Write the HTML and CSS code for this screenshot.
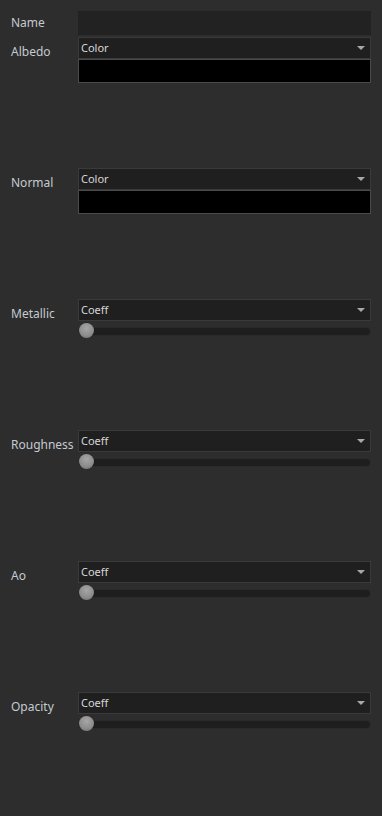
FILE: index.html
```html
<!DOCTYPE html>
<html>
<head>
<meta charset="utf-8">
<link rel="stylesheet" href="styles.css">
</head>
<body>
<div class="panel">
  <div class="row name-row">
    <div class="label">Name</div>
    <div class="name-input"></div>
  </div>

  <div class="row section">
    <div class="label sec-label">Albedo</div>
    <div class="controls">
      <div class="combo"><span>Color</span><i class="arrow"></i></div>
      <div class="swatch"></div>
    </div>
  </div>

  <div class="row section">
    <div class="label sec-label">Normal</div>
    <div class="controls">
      <div class="combo"><span>Color</span><i class="arrow"></i></div>
      <div class="swatch"></div>
    </div>
  </div>

  <div class="row section">
    <div class="label sec-label">Metallic</div>
    <div class="controls">
      <div class="combo"><span>Coeff</span><i class="arrow"></i></div>
      <div class="slider"><div class="groove"></div><div class="knob"></div></div>
    </div>
  </div>

  <div class="row section">
    <div class="label sec-label">Roughness</div>
    <div class="controls">
      <div class="combo"><span>Coeff</span><i class="arrow"></i></div>
      <div class="slider"><div class="groove"></div><div class="knob"></div></div>
    </div>
  </div>

  <div class="row section">
    <div class="label sec-label">Ao</div>
    <div class="controls">
      <div class="combo"><span>Coeff</span><i class="arrow"></i></div>
      <div class="slider"><div class="groove"></div><div class="knob"></div></div>
    </div>
  </div>

  <div class="row section">
    <div class="label sec-label">Opacity</div>
    <div class="controls">
      <div class="combo"><span>Coeff</span><i class="arrow"></i></div>
      <div class="slider"><div class="groove"></div><div class="knob"></div></div>
    </div>
  </div>
</div>
</body>
</html>
```

FILE: styles.css
```css
html, body {
  margin: 0;
  padding: 0;
  background: #2d2d2d;
  height: 100%;
  overflow: hidden;
}

.panel {
  display: flex;
  flex-direction: column;
  padding: 11px 11px 0 11px;
  font-family: "Noto Sans", "DejaVu Sans", sans-serif;
}

.row {
  display: grid;
  grid-template-columns: 67px 293px;
  flex: none;
}

.name-row {
  align-items: center;
  height: 24px;
  margin-bottom: 2px;
}

.label {
  color: #c4cad0;
  font-size: 12px;
  line-height: 16px;
  white-space: nowrap;
}

.name-input {
  height: 24px;
  background: #222222;
}

.section {
  height: 131px;
  align-items: start;
}

.sec-label {
  margin-top: 7px;
}

.controls {
  display: flex;
  flex-direction: column;
}

.combo {
  box-sizing: border-box;
  height: 22px;
  background: #1f1f1f;
  border: 1px solid #3a3a3a;
  display: flex;
  align-items: center;
  justify-content: space-between;
  padding: 0 5px 0 2px;
  color: #d6d6d6;
  font-size: 11px;
}

.combo span {
  line-height: 14px;
}

.arrow {
  width: 0;
  height: 0;
  border-left: 4px solid transparent;
  border-right: 4px solid transparent;
  border-top: 4px solid #a8a8a8;
}

.swatch {
  box-sizing: border-box;
  height: 24px;
  background: #000;
  border: 1px solid #4a4a4a;
}

.slider {
  position: relative;
  height: 20px;
  display: flex;
  align-items: center;
}

.groove {
  box-sizing: border-box;
  width: 100%;
  height: 9px;
  background: #1e1e1e;
  border: 1px solid #2a2a2a;
  border-radius: 5px;
}

.knob {
  position: absolute;
  left: 1px;
  top: 2px;
  width: 15px;
  height: 15px;
  border-radius: 50%;
  background: radial-gradient(circle at 50% 35%, #a6a6a6 0%, #8e8e8e 55%, #6e6e6e 100%);
}
```
